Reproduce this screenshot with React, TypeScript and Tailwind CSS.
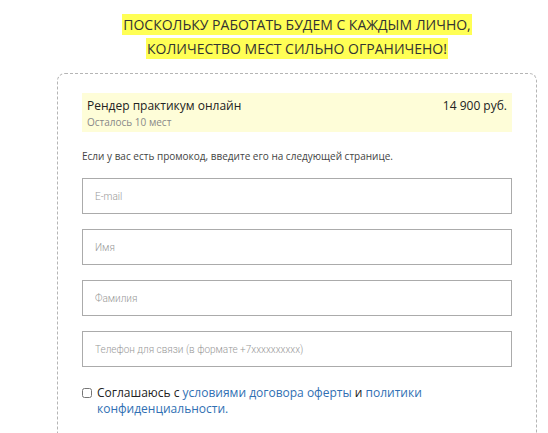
import React from "react"

const fields = [
  "E-mail",
  "Имя",
  "Фамилия",
  "Телефон для связи (в формате +7xxxxxxxxxx)",
]

export default function App() {
  return (
    <div className="w-[548px] h-[433px] overflow-hidden bg-white font-['Open_Sans',sans-serif]">
      <div className="ml-[57px] w-[480px]">
        <h1 className="pt-[13px] text-center text-[14px] leading-[24px] font-normal text-[#333] uppercase">
          <span className="bg-[#ffff55] px-[1px] py-[1px]">Поскольку работать будем с каждым лично,</span>
          <br />
          <span className="bg-[#ffff55] px-[1px] py-[1px]">количество мест сильно ограничено!</span>
        </h1>

        <div className="mt-[12px] h-[400px] rounded-[8px] border border-dashed border-[#b5b5b5] px-[24px] pt-[19px]">
          <div className="flex justify-between bg-[#fefdd8] px-[5px] pt-[4px] h-[39px]">
            <div>
              <div className="text-[12px] leading-[17px] text-[#222]">Рендер практикум онлайн</div>
              <div className="text-[10px] leading-[16px] text-[#888]">Осталось 10 мест</div>
            </div>
            <div className="text-[12px] leading-[17px] text-[#222]">14 900 руб.</div>
          </div>

          <p className="mt-[17px] text-[10px] leading-[14px] text-[#444]">
            Если у вас есть промокод, введите его на следующей странице.
          </p>

          <div className="mt-[15px] flex flex-col gap-[15px]">
            {fields.map((f) => (
              <input
                key={f}
                placeholder={f}
                className="h-[36px] w-full border border-[#ababab] px-[12px] text-[10px] font-['Roboto',sans-serif] font-light placeholder:text-[#999] outline-none"
              />
            ))}
          </div>

          <label className="mt-[18px] flex items-start gap-[5px] text-[12px] leading-[16px] text-[#222]">
            <input type="checkbox" className="mt-[3px] h-[10px] w-[10px] accent-[#ddd]" />
            <span>
              Соглашаюсь с <a className="text-[#2f6fb3]">условиями договора оферты</a> и{" "}
              <a className="text-[#2f6fb3]">политики конфиденциальности.</a>
            </span>
          </label>
        </div>
      </div>
    </div>
  )
}
